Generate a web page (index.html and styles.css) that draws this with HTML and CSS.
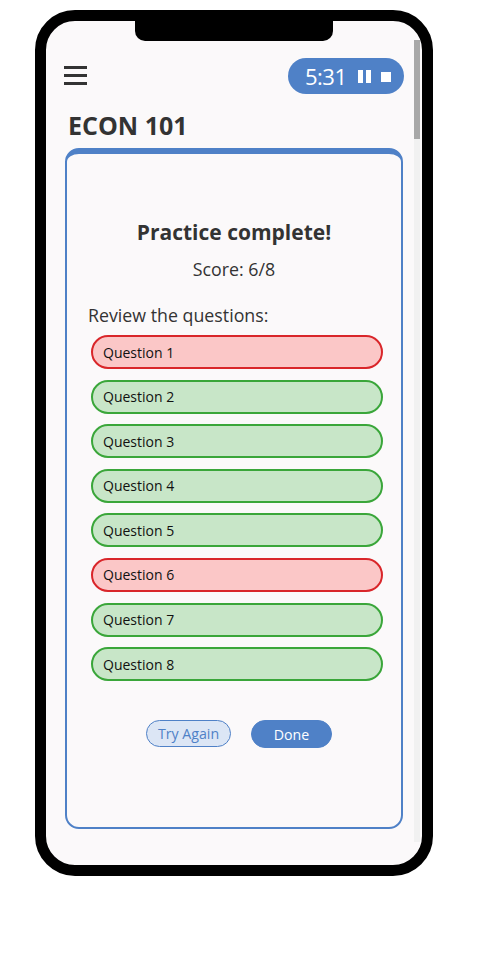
FILE: index.html
```html
<!DOCTYPE html>
<html>
<head>
<meta charset="utf-8">
<link rel="stylesheet" href="styles.css">
</head>
<body>
<div class="phone">
  <div class="notch"></div>
  <div class="content">
    <div class="header">
      <div class="menu"><span></span><span></span><span></span></div>
      <div class="timer">
        <span class="time">5:31</span>
        <span class="pause"><i></i><i></i></span>
        <span class="stop"></span>
      </div>
    </div>
    <h1 class="title">ECON 101</h1>
    <div class="card">
      <h2 class="done-title">Practice complete!</h2>
      <p class="score">Score: 6/8</p>
      <p class="review">Review the questions:</p>
      <ul class="questions">
        <li class="q wrong">Question 1</li>
        <li class="q right">Question 2</li>
        <li class="q right">Question 3</li>
        <li class="q right">Question 4</li>
        <li class="q right">Question 5</li>
        <li class="q wrong">Question 6</li>
        <li class="q right">Question 7</li>
        <li class="q right">Question 8</li>
      </ul>
      <div class="actions">
        <button class="btn btn-secondary">Try Again</button>
        <button class="btn btn-primary">Done</button>
      </div>
    </div>
  </div>
  <div class="scrollbar"><div class="thumb"></div></div>
</div>
</body>
</html>
```
FILE: styles.css
```css
* { box-sizing: border-box; }
html, body { margin: 0; padding: 0; background: #fff; }
body { font-family: "Open Sans", "Noto Sans", sans-serif; color: #333; }

.phone {
  position: relative;
  width: 398px;
  height: 866px;
  margin: 10px 0 0 35px;
  border: 11px solid #000;
  border-radius: 40px;
  background: #fbf9fa;
  display: flex;
  overflow: hidden;
}
.notch {
  position: absolute;
  left: 89px;
  top: 0;
  width: 198px;
  height: 20px;
  background: #000;
  border-radius: 0 0 10px 10px;
}
.content {
  flex: 1;
  padding: 37px 11px 0 19px;
  display: flex;
  flex-direction: column;
}
.header {
  height: 36px;
  display: flex;
  align-items: center;
  justify-content: space-between;
}
.menu {
  width: 23px;
  margin-left: -1px;
  margin-top: -2px;
  display: flex;
  flex-direction: column;
  gap: 5px;
}
.menu span { display: block; height: 3px; background: #333; }
.timer {
  width: 116px;
  height: 36px;
  margin-right: -1px;
  border-radius: 18px;
  background: #4f81c7;
  color: #fff;
  display: flex;
  align-items: center;
  padding-left: 17px;
}
.time { font-size: 22px; line-height: 1; letter-spacing: -0.5px; }
.pause { display: flex; gap: 3px; margin-left: 11px; }
.pause i { display: block; width: 5px; height: 13px; background: #fff; }
.stop { width: 10px; height: 10px; background: #fff; margin-left: 10px; margin-top: 2px; }

.title {
  margin: 13px 0 0 3px;
  font-size: 25px;
  line-height: 36px;
  font-weight: 700;
  color: #333;
}
.card {
  margin-top: 5px;
  height: 681px;
  border: 2px solid #4f81c7;
  border-top-width: 6px;
  border-radius: 14px;
  display: flex;
  flex-direction: column;
  align-items: center;
}
.done-title {
  margin: 63px 0 0;
  font-size: 21px;
  line-height: 30px;
  font-weight: 700;
  color: #333;
}
.score {
  margin: 9px 0 0;
  font-size: 17.8px;
  line-height: 26px;
  color: #333;
}
.review {
  align-self: flex-start;
  margin: 19px 0 0 21px;
  font-size: 17.8px;
  line-height: 28px;
  color: #333;
}
.questions {
  list-style: none;
  margin: 6px 0 0;
  padding: 0 18px 0 24px;
  align-self: stretch;
  display: flex;
  flex-direction: column;
  gap: 10.6px;
}
.q {
  height: 34px;
  border-radius: 17px;
  border: 2px solid;
  padding-left: 10px;
  display: flex;
  align-items: center;
  font-size: 14px;
  color: #111;
}
.q.wrong { border-color: #d9262a; background: #fbc7c7; }
.q.right { border-color: #3aa63a; background: #c8e6c8; }

.actions {
  margin: 39px 0 0 10px;
  display: flex;
  gap: 20px;
}
.btn {
  height: 27px;
  border-radius: 14px;
  font-family: inherit;
  font-size: 14.2px;
  padding: 0;
  cursor: pointer;
}
.btn-secondary {
  width: 85px;
  background: #dce6f5;
  border: 1px solid #4f81c7;
  color: #4f81c7;
}
.btn-primary {
  width: 81px;
  height: 28px;
  background: #4f81c7;
  border: 1px solid #4f81c7;
  color: #fff;
}
.scrollbar {
  width: 6px;
  margin: 19px 2px 23px 0;
  background: #f1f1f1;
}
.thumb { height: 99px; background: #a8a8a8; }
```
